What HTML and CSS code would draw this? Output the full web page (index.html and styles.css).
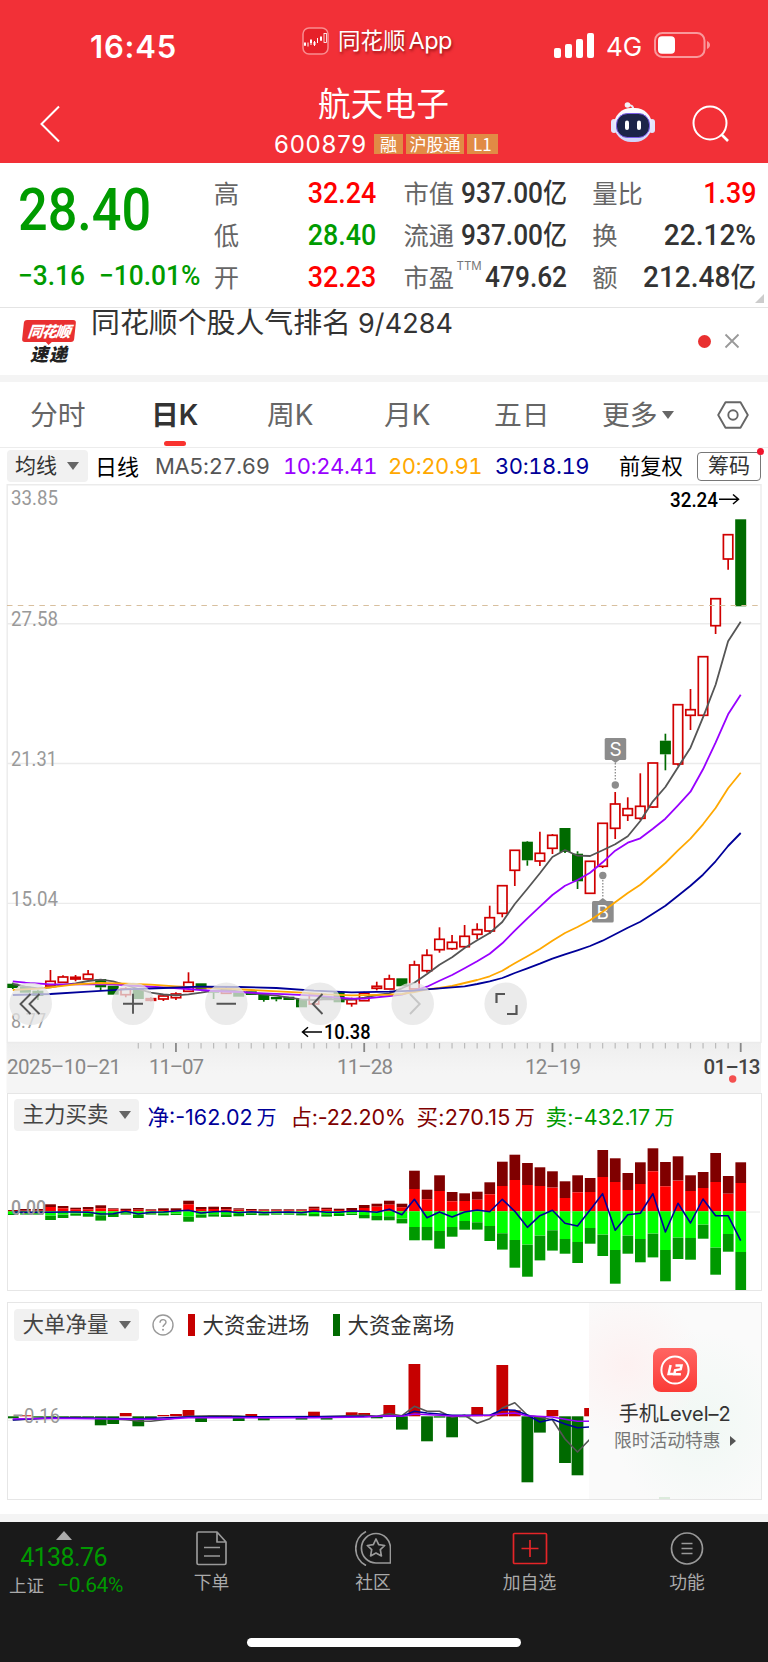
FILE: index.html
```html
<!DOCTYPE html>
<html lang="zh-CN">
<head>
<meta charset="utf-8">
<title>航天电子 600879</title>
<link rel="stylesheet" href="styles.css">
</head>
<body>
<header class="top">
  <div class="status">
    <span class="clock">16:45</span>
    <span class="app">
      <svg class="app-icon" viewBox="0 0 27 28"><rect x="1" y="1" width="25" height="26" rx="6" fill="#e62129" stroke="#f98d90" stroke-width="1.5"/><g stroke="#fff" stroke-width="1" fill="none"><path d="M3 15v4M6 15.500v4M9 12v6M12.500 14v5M15.500 11v5M19 9v5M23 6v10"/></g><g fill="#fff"><rect x="2" y="16" width="2" height="2.500"/><rect x="8" y="13" width="2" height="3"/><rect x="11.500" y="15" width="2" height="3"/><rect x="18" y="10" width="2" height="3.500"/></g><rect x="22" y="6.500" width="2.400" height="9" fill="#e62129" stroke="#fff" stroke-width=".8"/></svg>
      <span class="app-name">同花顺<i>App</i></span>
    </span>
    <span class="signal"><i></i><i></i><i></i><i></i></span>
    <span class="net">4G</span>
    <svg class="battery" viewBox="0 0 58 26"><rect x="1" y="1" width="49.500" height="24" rx="7.500" fill="none" stroke="#f9989b" stroke-width="2"/><rect x="4" y="4.300" width="17" height="17.400" rx="4" fill="#fff"/><path d="M53 9c4 1.500 4 6.500 0 8z" fill="#f9989b"/></svg>
  </div>
  <div class="nav">
    <svg class="back" viewBox="0 0 22 38"><path d="M20 1.500 2.500 19 20 36.500" fill="none" stroke="#fff" stroke-width="2"/></svg>
    <div class="stock">
      <div class="name">航天电子</div>
      <div class="code"><span class="num">600879</span><b>融</b><b>沪股通</b><b>L1</b></div>
    </div>
    <svg class="robot" viewBox="0 0 44 42">
      <defs><linearGradient id="shell" x1="0" y1="0" x2="0" y2="1"><stop offset="0" stop-color="#fff"/><stop offset="1" stop-color="#cfd3fb"/></linearGradient></defs>
      <path d="M22 9Q23 4 17 4" fill="none" stroke="#e8e8f4" stroke-width="2"/><circle cx="16.500" cy="4" r="2.800" fill="#f3f3fa"/>
      <rect x="0" y="18" width="6" height="14" rx="3" fill="#e3e5fb"/><rect x="38" y="18" width="6" height="14" rx="3" fill="#e3e5fb"/>
      <rect x="3" y="7" width="38" height="34" rx="17" fill="url(#shell)"/>
      <rect x="5.500" y="12.500" width="33" height="24" rx="11" fill="#1c2448" stroke="#7a5be8" stroke-width="1"/>
      <rect x="14" y="19.500" width="4" height="9.500" rx="2" fill="#fff"/><rect x="26" y="19.500" width="4" height="9.500" rx="2" fill="#fff"/>
    </svg>
    <svg class="search" viewBox="0 0 38 38"><circle cx="18" cy="18" r="16.500" fill="none" stroke="#fff" stroke-width="2"/><path d="M29.500 29.500 36 36" stroke="#fff" stroke-width="2.600"/></svg>
  </div>
</header>

<section class="quote">
  <div class="last">
    <div class="price">28.40</div>
    <div class="change"><span>−3.16</span><span>−10.01%</span></div>
  </div>
  <dl class="col c1">
    <div><dt>高</dt><dd class="up">32.24</dd></div>
    <div><dt>低</dt><dd class="down">28.40</dd></div>
    <div><dt>开</dt><dd class="up">32.23</dd></div>
  </dl>
  <dl class="col c2">
    <div><dt>市值</dt><dd>937.00<em>亿</em></dd></div>
    <div><dt>流通</dt><dd>937.00<em>亿</em></dd></div>
    <div><dt>市盈<sup>TTM</sup></dt><dd>479.62</dd></div>
  </dl>
  <dl class="col c3">
    <div><dt>量比</dt><dd class="up">1.39</dd></div>
    <div><dt>换</dt><dd class="wide-n">22.12%</dd></div>
    <div><dt>额</dt><dd class="wide-n">212.48<em>亿</em></dd></div>
  </dl>
  <span class="corner"></span>
</section>

<section class="news">
  <div class="badge"><span class="b1">同花顺</span><span class="b2">速递</span></div>
  <p>同花顺个股人气排名<span>9/4284</span></p>
  <i class="dot"></i>
  <svg class="close" viewBox="0 0 16 16"><path d="M1.500 1.500l13 13M14.500 1.500l-13 13" stroke="#999" stroke-width="1.800"/></svg>
</section>

<nav class="tabs">
  <span>分时</span><span class="on">日<i>K</i></span><span>周<i>K</i></span><span>月<i>K</i></span><span>五日</span><span class="more">更多<i class="tri"></i></span>
  <svg class="hex" viewBox="0 0 32 28"><path d="M8.500 1.200h15L30.800 14l-7.300 12.800h-15L1.200 14z" fill="none" stroke="#666" stroke-width="1.900" stroke-linejoin="round"/><circle cx="16" cy="14" r="4.700" fill="none" stroke="#666" stroke-width="1.900"/></svg>
</nav>

<section class="ma">
  <span class="pick">均线<i class="tri"></i></span>
  <span class="kind">日线</span>
  <span class="v m5">MA5:27.69</span><span class="v m10">10:24.41</span><span class="v m20">20:20.91</span><span class="v m30">30:18.19</span>
  <span class="adj">前复权</span>
  <span class="chips">筹码</span>
</section>

<svg class="kline" id="kline" viewBox="0 484 768 609"></svg>

<section class="panel flow">
  <div class="head"><span class="pick wide">主力买卖<i class="tri"></i></span>
    <span class="f f1">净:-162.02<em>万</em></span><span class="f f2">占:-22.20%</span><span class="f f3">买:270.15<em>万</em></span><span class="f f4">卖:-432.17<em>万</em></span></div>
  <svg id="flow" viewBox="8 1134 752 156"></svg>
</section>

<section class="panel big">
  <div class="main">
    <div class="head"><span class="pick wide">大单净量<i class="tri"></i></span>
      <svg class="help" viewBox="0 0 22 22"><circle cx="11" cy="11" r="10" fill="none" stroke="#999" stroke-width="1.400"/><path d="M8 8.700c0-4 6-4 6-.4 0 2.300-3 2.400-3 4.700" fill="none" stroke="#999" stroke-width="1.400"/><circle cx="11" cy="15.800" r="1" fill="#999"/></svg>
      <span class="leg in"><span>大资金进场</span></span><span class="leg out"><span>大资金离场</span></span></div>
    <svg id="big" viewBox="8 1343 581 156"></svg>
  </div>
  <aside class="promo">
    <svg class="l2" viewBox="0 0 44 44"><defs><linearGradient id="l2bg" x1="0" y1="0" x2="0" y2="1"><stop offset="0" stop-color="#ff6562"/><stop offset="1" stop-color="#fb3b36"/></linearGradient></defs><rect width="44" height="44" rx="8" fill="url(#l2bg)"/><circle cx="22" cy="22" r="13.600" fill="none" stroke="#fff" stroke-width="2"/><path d="M17.600 17 15.600 26h4.600M22.500 17.600h6l-.8 3.600-5.600 1.100-.8 4h6.600" fill="none" stroke="#fff" stroke-width="2.500"/></svg>
    <strong>手机<i>Level–2</i></strong>
    <small>限时活动特惠<i></i></small>
    <i class="peek"></i>
  </aside>
</section>

<footer class="bar">
  <div class="index"><i class="uptri"></i><span class="iv">4138.76</span><span class="ir">上证<b>−0.64%</b></span></div>
  <div class="items">
    <a class="i1"><svg viewBox="0 0 36 36"><path d="M4 3.500a1.500 1.500 0 0 1 1.500-1.500H24l9 10v21a1.500 1.500 0 0 1-1.500 1.500h-26A1.500 1.500 0 0 1 4 33zM24 2v10h9M11 17.500h16M11 26h16" transform="translate(-1 0)"/></svg>下单</a>
    <a class="i2"><svg viewBox="0 0 36 36"><path d="M21 3.500a14.500 15 0 0 1 14.500 15V33H21A14.500 14.700 0 0 1 21 3.500zM11 1.500a18.500 19 0 0 0 0 34M21 9l2.700 5.700 6 .8-4.400 4.200 1.100 6.200L21 23l-5.400 2.900 1.100-6.200-4.400-4.200 6-.8z"/></svg>社区</a>
    <a class="i3"><svg class="red" viewBox="0 0 36 36"><path d="M1.500 4.500a1 1 0 0 1 1-1h31a1 1 0 0 1 1 1v28a1 1 0 0 1-1 1h-31a1 1 0 0 1-1-1zM18 10v17M9.500 18.500h17"/></svg>加自选</a>
    <a class="i4"><svg viewBox="0 0 36 36"><circle cx="18" cy="18.500" r="15.500"/><path d="M12.500 13.500h11M12.500 18.500h11M12.500 23.500h11"/></svg>功能</a>
  </div>
  <div class="home"></div>
</footer>
<script src="charts.js"></script>
</body>
</html>
```
FILE: styles.css
```css
* { box-sizing: border-box; }
body { margin: 0; width: 768px; height: 1662px; overflow: hidden; background: #fff; color: #333; font-family: Inter, "Noto Sans CJK SC", sans-serif; }
i, em { font-style: normal; }
svg { display: block; flex: none; }
p, dl, dd { margin: 0; }

.top { height: 163px; background: #f23037; color: #fff; }
.status { height: 75px; display: flex; position: relative; }
.clock { margin: 28px 0 0 90px; width: 212px; font-size: 31px; line-height: 38px; font-weight: 600; letter-spacing: .8px; }
.app { display: flex; margin-top: 27px; width: 252px; }
.app-icon { width: 27px; height: 28px; }
.app-name { margin-left: 9px; font-size: 22.500px; line-height: 28px; text-shadow: 1px 2px 3px rgba(90,0,0,.6); white-space: nowrap; }
.app-name i { margin-left: 3px; font-size: 23.500px; letter-spacing: -.6px; }
.signal { display: flex; gap: 4px; align-items: flex-end; height: 25px; margin-top: 33px; width: 52px; }
.signal i { width: 7px; background: #fff; border-radius: 2px; height: 10px; }
.signal i:nth-child(2) { height: 14px; }
.signal i:nth-child(3) { height: 19px; }
.signal i:nth-child(4) { height: 25px; }
.net { width: 48px; margin-top: 32px; font-size: 26px; line-height: 30px; }
.battery { width: 58px; height: 26px; margin-top: 32px; }
.nav { display: flex; height: 88px; }
.back { width: 22px; height: 38px; margin: 30px 0 0 39px; }
.stock { width: 549px; height: 88px; padding-left: 213px; }
.name { margin-top: 8px; height: 44px; line-height: 44px; font-size: 32.500px; letter-spacing: .3px; padding-left: 44px; }
.code { display: flex; align-items: center; gap: 3px; height: 32px; margin-top: 1px; }
.num { font-size: 24px; width: 97px; letter-spacing: .8px; }
.code b { background: #e18b45; font-weight: 400; font-size: 17px; line-height: 20px; height: 20px; padding: 0 6px; font-family: "Noto Sans CJK SC"; }
.code b:nth-child(3) { padding: 0 3.500px; }
.robot { width: 44px; height: 42px; margin: 26px 0 0 1px; }
.search { width: 38px; height: 38px; margin: 30px 0 0 37px; }

.quote { position: relative; height: 145px; display: flex; border-bottom: 1px solid #e4e4e4; padding: 9px 12px 0 18px; font-family: Roboto, "Noto Sans CJK SC", sans-serif; }
.last { width: 196px; color: #009b00; }
.price { font-size: 60px; line-height: 74px; font-weight: 500; transform: scaleX(.87); transform-origin: left; padding-top: 1px; }
.change { display: flex; justify-content: space-between; width: 194px; margin-top: 12px; font-size: 28px; line-height: 34px; white-space: nowrap; font-weight: 500; transform: scaleX(.94); transform-origin: left; }
.col > div { display: flex; justify-content: space-between; height: 42px; line-height: 42px; white-space: nowrap; }
.c1 { width: 163px; }
.c2 { width: 164px; margin-left: 27px; }
.c3 { width: 164px; margin-left: 25px; }
dt { color: #666; font-size: 25.300px; font-family: "Noto Sans CJK SC"; position: relative; top: -1px; }
dt sup { position: absolute; left: 53px; top: -10px; font: 11.500px Inter; line-height: 42px; color: #777; }
dd { margin-left: -30px; font-size: 29.500px; font-weight: 500; transform: scaleX(.91); transform-origin: right; }
.c2 dd { transform: scaleX(.89); }
dd.wide-n { transform: scaleX(.95); }
dd em { font-size: 27px; font-weight: 500; }
.up { color: #f00; }
.down { color: #009b00; }
.corner { position: absolute; right: 4px; bottom: 4px; border-left: 9px solid transparent; border-bottom: 9px solid #ccc; }

.news { display: flex; height: 74px; border-bottom: 7px solid #f4f4f4; }
.badge { width: 52px; margin: 12px 0 0 23px; text-align: center; font-family: "Noto Sans CJK SC"; font-weight: 900; font-style: italic; }
.badge span { display: block; }
.b1 { position: relative; background: #e93030; color: #fff; font-size: 15px; line-height: 21px; height: 22px; border-radius: 3px; transform: skewX(-6deg); letter-spacing: -1px; }
.b1::after { content: ""; position: absolute; left: 23px; top: 21px; border: 4px solid transparent; border-top-color: #e93030; border-bottom: 0; }
.b2 { color: #222; font-size: 18px; line-height: 22px; letter-spacing: 1px; }
.news p { margin: -6px 0 0 16px; width: 607px; font-size: 28.900px; line-height: 42px; color: #333; white-space: nowrap; }
.news p span { margin-left: 7px; font-size: 27px; letter-spacing: .1px; }
.dot { width: 13px; height: 13px; border-radius: 50%; background: #e93030; margin-top: 27px; }
.close { width: 16px; height: 16px; margin: 25px 0 0 13px; }

.tabs { display: flex; align-items: center; height: 66px; border-bottom: 1px solid #ececec; font-size: 27.800px; color: #666; padding-left: 30px; font-family: "Noto Sans CJK SC"; white-space: nowrap; }
.tabs i { font-family: Inter; }
.tabs span { height: 65px; line-height: 62px; width: 116px; }
.tabs span:nth-child(1) { width: 121px; }
.tabs span:nth-child(3) { width: 117px; }
.tabs span:nth-child(4) { width: 110px; }
.tabs span:nth-child(5) { width: 108px; }
.tabs span:nth-child(6) { width: 115px; }
.tabs .on { font-weight: 600; color: #333; position: relative; }
.tabs .on::after { content: ""; position: absolute; left: 13px; bottom: 1px; width: 22px; height: 5px; border-radius: 3px; background: #f9332f; }
.tri { display: inline-block; border: 6px solid transparent; border-top: 8px solid #666; border-bottom: 0; vertical-align: middle; }
.more .tri { margin-left: 4px; margin-top: -4px; }
.hex { width: 32px; height: 28px; }

.ma { display: flex; align-items: center; height: 36px; padding-left: 7px; font-size: 22px; white-space: nowrap; }
.pick { width: 81px; height: 32px; background: #f1f1f1; border-radius: 4px; line-height: 31px; padding-left: 8px; font-size: 21px; color: #333; }
.pick .tri { margin-left: 10px; margin-top: -2px; }
.kind { width: 67px; padding: 0 0 3px 7px; color: #000; }
.v { font-feature-settings: "tnum"; letter-spacing: -.4px; }
.m5 { width: 128px; color: #555; }
.m10 { width: 105px; color: #90f; }
.m20 { width: 107px; color: #ffa800; }
.m30 { width: 124px; color: #009; }
.adj { width: 78px; padding-bottom: 3px; font-size: 21.300px; color: #000; }
.chips { position: relative; width: 64px; height: 29px; border: 1.500px solid #777; border-radius: 4px; text-align: center; line-height: 26px; font-size: 21px; }
.chips::after { content: ""; position: absolute; right: -4px; top: -5px; width: 7px; height: 7px; border-radius: 50%; background: #f0142d; }

.kline { width: 768px; height: 609px; }
.panel { width: 755px; height: 198px; margin-left: 6.500px; border: 1px solid #e6e6e6; }
.flow > svg { width: 752px; height: 156px; margin-left: .5px; }
.head { height: 40px; display: flex; align-items: center; padding: 2px 0 0 6px; font-size: 22px; white-space: nowrap; }
.wide { width: 125px; padding-left: 9px; font-size: 21.500px; color: #444; }
.head em { margin-left: 4px; font-size: 20px; }
.f { font-size: 21.500px; letter-spacing: 0; }
.f1 { margin-left: 9px; width: 143px; color: #009; }
.f2 { width: 126px; color: #800000; letter-spacing: -.2px; }
.f3 { width: 129px; color: #800000; letter-spacing: .3px; }
.f4 { color: #090; letter-spacing: .2px; }
.big { margin-top: 11px; display: flex; }
.main { width: 581.500px; }
.big .head { height: 41px; padding-top: 3px; }
.main > svg { width: 581px; height: 156px; margin-left: .5px; margin-top: -1px; }
.help { width: 22px; height: 22px; margin: 0 14px 0 13px; }
.leg { font-size: 21.400px; width: 145px; display: flex; align-items: center; }
.leg span { padding-bottom: 3px; }
.leg::before { content: ""; width: 7px; height: 22px; margin-right: 8px; background: #c60000; }
.out::before { background: #006a00; }
.promo { flex: 1; display: flex; flex-direction: column; align-items: center; background: radial-gradient(ellipse at 22% 32%, #fdf1f1 0, rgba(253,241,241,0) 40%), radial-gradient(ellipse at 65% 62%, #f0f8f4 0, rgba(240,248,244,0) 55%), #fafafa; }
.l2 { width: 44px; height: 44px; margin-top: 45px; }
.promo strong { margin-top: 8px; font-weight: 400; font-size: 20px; line-height: 28px; color: #333; }
.promo small { font-size: 17.800px; line-height: 25px; color: #777; display: flex; align-items: center; }
.promo small i { margin-left: 9px; border: 5px solid transparent; border-left: 6px solid #555; border-right: 0; }
.peek { width: 11px; height: 2px; margin: auto 20px 0 0; background: #dcebdc; }

.bar { margin-top: 14px; height: 149px; border-top: 8px solid #f4f4f4; background: #1a1a1a; display: grid; grid-template: 108px 1fr / 130px 1fr; color: #aaa; }
.index { display: flex; flex-direction: column; align-items: center; padding-top: 9px; font-family: Roboto, "Noto Sans CJK SC"; }
.uptri { border: 8px solid transparent; border-bottom: 9px solid #aaa; border-top: 0; margin-right: 3px; }
.iv { font-size: 25px; line-height: 29px; margin-top: 3px; margin-right: 3px; color: #090; letter-spacing: -.6px; }
.ir { font-size: 17.500px; line-height: 27px; margin-left: 2px; }
.ir b { margin-left: 13px; font-size: 21px; font-weight: 400; color: #090; letter-spacing: -.4px; }
.items { display: flex; font-size: 17.800px; }
.items a { display: flex; flex-direction: column; align-items: center; padding-top: 8px; width: 160px; line-height: 26px; gap: 4px; }
.items .i1 { width: 163px; }
.items svg { width: 36px; height: 36px; fill: none; stroke: #999; stroke-width: 1.700; stroke-linejoin: round; }
.items .red { stroke: #e52528; }
.items .i3 { width: 153px; }
.items .i4 { width: 162px; }
.home { grid-column: 1 / 3; justify-self: center; width: 274px; height: 9px; margin-top: 8px; border-radius: 5px; background: #fff; }
```
FILE: charts.js
```js
const STEP = 12.55, X0 = 12.8;
const xAt = i => X0 + STEP * i;
const rect = (x, y, w, h, c, extra = '') => `<rect x="${x.toFixed(1)}" y="${y.toFixed(1)}" width="${w}" height="${Math.max(h, 1).toFixed(1)}" fill="${c}" ${extra}/>`;
const label = (x, y, w, s, size, c, weight = 400) => `<text x="${x}" y="${y}" textLength="${w}" lengthAdjust="spacingAndGlyphs" font-family="Roboto" font-size="${size}" font-weight="${weight}" fill="${c}">${s}</text>`;
const poly = (pts, c, w = 1.8) => `<polyline points="${pts.map(p => xAt(p[0]).toFixed(1) + ',' + p[1].toFixed(1)).join(' ')}" fill="none" stroke="${c}" stroke-width="${w}" stroke-linejoin="round"/>`;

// colour, body top, body bottom, high, low
const candles = [
  ['g',983.7,988,982.7,989],['g',986.7,992.7],['g',990.7,996,990,1000],['r',981.3,986,970],['r',977,982.3,975.3],['r',977.3,979,975,981.3],['r',974.3,979,970],
  ['g',979,987.3,979,990],['g',985.7,994.7],['r',989,994.7,987.3,997.3],['g',988.3,999],['r',998.7,1000.3,997.3,1001.3],['r',996,999,995,1001],['r',994,997.7,992.3,1000],
  ['r',982.3,991.3,972.3],['g',983.3,989.3],['g',990,992.7,990,999],['r',989,993.3,986],['g',991.3,996.7],['g',991.3,995],['g',994.7,1000,994.7,1001.7],['g',997,999.3,997,1001.3],
  ['g',996.7,1000],['g',999,1007.3],['r',995.3,1004,995.3,1005],['g',996.7,998.7],['g',991.7,1002.3],['r',999.7,1003.7,997.7,1006.7],['r',993.3,1000.7,991.7],['r',986.3,988.3,981.7,990.3],
  ['r',979,989,974.7],['g',978.3,986.3],['r',965,989,960.7],['r',955.3,970.7,949.3,972.7],['r',939.3,949.7,927.3,952.7],['r',942.3,948.7,935,950],['r',936.3,946.7,925,948],
  ['r',929.7,934.3,923.3,939.3],['r',917.7,931,905.7,934],['r',885.7,913.3,885.7,917.3],['r',850.3,870.3,850.3,886],['g',841.7,860.3,841,865.7],['r',853.3,861,831.7,866],
  ['r',835.3,848.3,834,854],['g',828,852,828,853],['g',853.7,881.3,851.3,889],['r',861.3,893.3],['r',823.3,866.3,823.3,868],['r',804,828.3,792,839],['r',808.7,815.3,797.3,821],
  ['r',806.3,818.3,773.3,820],['r',763,807,763,808],['g',740.7,754.3,733.7,770.3],['r',704.7,764,704.7,765.7],['r',709.7,715.3,689,730],['r',656.7,715.3],['r',598.7,625.7,598.7,634],
  ['r',534.7,559,534.7,569.7],['g',519.3,606.3]
];
const ma5 = [984,986.7,988.3,987.3,985,983.3,981,979.7,981.3,985,989,992.7,994.5,995.3,994.3,992.7,990.7,990,991.3,993.3,994.7,995.7,997.7,999.3,1000,999,999.3,999.3,997.7,995,993.3,988.3,982.7,974,964.7,957.3,948,940.3,933,922,904,888.7,873.3,857,850,855.7,856,850.3,844.3,836.3,821,801.3,787,767.3,747.7,717.3,684.7,641.3,621.7].map((y, i) => [i, y]);
const ma10 = [[0,981.3],[1,982.7],[3,984.3],[8,984.3],[10,986],[12,987.3],[14,989],[16,991],[18,992],[20,993.3],[22,994.3],[24,995.7],[26,997.7],[27,998.7],[28,998.7],[29,997.3],[30,996],[31,994.7],[32,990.7],[33,986.7],[34,980.7],[35,975],[36,968.3],[37,961.3],[38,953.7],[39,943.3],[40,930.7],[41,918.3],[42,906.7],[43,895],[44,885.7],[45,880],[46,872.7],[47,862.3],[48,850.7],[49,842.7],[50,838.3],[51,828.7],[52,818.7],[53,805.3],[54,791.7],[55,769.3],[56,742.7],[57,714.3],[58,694.7]];
const ma20 = [[0,990],[2,988.7],[3,987.3],[5,984.3],[7,983],[9,983.7],[11,984.7],[13,986.3],[17,988.7],[19,990],[23,992.7],[25,994.3],[27,995.3],[30,994.7],[31,994],[32,992],[33,989.3],[34,988],[35,986],[36,983],[37,980],[38,976.3],[39,970.7],[40,963.3],[41,956.3],[42,949],[43,940.7],[44,933],[45,927],[46,920.3],[47,911.7],[48,902.3],[49,893],[50,884.7],[51,874],[52,863],[53,850.3],[54,838.7],[55,824.3],[56,808],[57,788.3],[58,772.7]];
const ma30 = [[0,995],[3,994],[6,991.7],[9,989.3],[12,988],[15,986.7],[18,987],[21,988],[24,990.7],[27,992.3],[30,991.7],[32,990.7],[33,989.3],[34,988.3],[36,986.3],[37,984],[38,981.3],[39,978],[40,973],[41,968.3],[42,963.7],[43,958.7],[44,954.3],[45,950.3],[46,946],[47,940.7],[48,934.3],[49,927.7],[50,921.7],[51,913.7],[52,905.7],[53,895.7],[54,885.7],[55,874.7],[56,861.3],[57,846],[58,833]];

function drawKline() {
  let s = '<defs><linearGradient id="fade" x1="0" y1="0" x2="0" y2="1"><stop offset="0" stop-color="#eee"/><stop offset=".6" stop-color="#f5f5f5"/></linearGradient></defs>';
  s += rect(6.5, 1043, 754.5, 50, 'url(#fade)');
  for (const y of [484.7, 623.7, 763.5, 903.4, 1042.5]) s += `<path d="M7 ${y}H761" stroke="#ebebeb" stroke-width="1.4"/>`;
  s += '<path d="M7.2 484V1043M761 484V1043" stroke="#ebebeb" stroke-width="1.4"/>';
  s += label(11, 505, 47, '33.85', 21, '#999') + label(11, 626, 47, '27.58', 21, '#999') + label(11, 766, 46, '21.31', 21, '#999') + label(11, 906, 47, '15.04', 21, '#999') + label(11, 1028, 35, '8.77', 21, '#999');
  candles.forEach(([k, t, b, h = t, l = b], i) => {
    const x = xAt(i), c = k === 'r' ? '#d00000' : '#006a00';
    if (h < t) s += `<path d="M${x} ${h}V${t}" stroke="${c}" stroke-width="1.7"/>`;
    if (l > b) s += `<path d="M${x} ${b}V${l}" stroke="${c}" stroke-width="1.7"/>`;
    s += k === 'r' ? rect(x - 4.7, t, 9.4, b - t, '#fff', 'stroke="#d00000" stroke-width="1.7"') : rect(x - 5.5, t, 11, b - t, c);
  });
  s += '<path d="M7 605.5H761" stroke="#d8bf9e" stroke-width="1" stroke-dasharray="5.500 5.300"/>';
  s += '<g fill="#8c8c8c"><rect x="604.700" y="738" width="21.500" height="22" rx="1.500"/><path d="M611.500 760h8l-4 3z"/><circle cx="615.300" cy="785" r="3.700"/><rect x="592" y="901" width="21.700" height="21.500" rx="1.500"/><path d="M598.800 901h8l-4-3z"/><circle cx="602.800" cy="875.500" r="3.700"/></g>';
  s += '<path d="M615.300 763V781M602.800 880V898" stroke="#8c8c8c" stroke-width="1.300" stroke-dasharray="1.500 1.500"/>';
  s += '<g font-family="Inter" font-size="19" fill="#fff" text-anchor="middle"><text x="615.500" y="756">S</text><text x="602.800" y="919">B</text></g>';
  s += poly(ma5, '#555') + poly(ma10, '#9900ff') + poly(ma20, '#ffa800') + poly(ma30, '#000099');
  s += label(670, 506.5, 48, '32.24', 21, '#000', 500) + '<path d="M719 499.300H738.500M733 494.500L738.500 499.300L733 504" fill="none" stroke="#000" stroke-width="1.500"/>';
  s += label(324, 1039, 46.5, '10.38', 21, '#000', 500) + '<path d="M322 1032H302.500M308 1027.300L302.500 1032L308 1036.700" fill="none" stroke="#000" stroke-width="1.500"/>';
  for (const x of [30.7, 133, 226.3, 320, 412.7, 505.7]) s += `<circle cx="${x}" cy="1003.7" r="21.3" fill="#e4e4e4" fill-opacity=".75"/>`;
  s += '<g fill="none" stroke="#555" stroke-width="1.900"><path d="M30.500 994L20.500 1004L30.500 1014M39.500 994L29.500 1004L39.500 1014M123 1003.700H143M133 993.700V1013.700M216.500 1003.700H236M322.500 994L312.800 1004L322.500 1014"/><path d="M410 994L419.700 1004L410 1014" stroke="#c6c6c6"/><path d="M496.500 1003V994H505M516.500 1005V1014H507" stroke-width="2.200"/></g>';
  for (let i = 10; i <= 58; i++) {
    const major = i % 15 === 13;
    s += `<path d="M${xAt(i)} 1043V${major ? 1052 : 1048.5}" stroke="${major ? '#888' : '#bbb'}" stroke-width="${major ? 1.8 : 1.2}"/>`;
  }
  const date = (x, w, t, c = '#888', wt = 400) => `<text x="${x}" y="1074" textLength="${w}" font-family="Roboto" font-size="20.500" font-weight="${wt}" fill="${c}">${t}</text>`;
  s += date(7, 114, '2025–10–21') + date(149, 55, '11–07') + date(337, 56, '11–28') + date(525, 56, '12–19') + date(703.5, 57, '01–13', '#444', 500);
  s += '<circle cx="732.700" cy="1079" r="3.700" fill="#f4504f"/>';
  document.getElementById('kline').innerHTML = s;
}

// dark red top, red top, green bottom, dark green bottom; thirds of a pixel from 1090
const flows = [
  [360,362,372,374],[357,362,370,374],[357,362,370,374],[343,351,377,390],[348,355,374,384],[353,358,371,377],[351,358,372,380],[346,355,376,392],[355,358,372,381],[356,360,370,374],
  [354,359,374,384],[358,361,370,374],[355,360,371,376],[355,360,371,375],[332,343,380,395],[351,357,374,383],[350,357,373,380],[351,358,373,381],[355,359,372,379],[357,361,370,375],
  [358,361,371,376],[358,361,371,374],[358,361,371,374],[358,361,371,376],[350,356,372,379],[353,358,373,380],[356,360,372,378],[354,360,371,375],[345,354,375,385],[341,350,378,391],
  [332,344,379,391],[341,352,386,400],[242,297,411,451],[299,328,411,451],[256,303,423,476],[306,334,411,440],[310,333,393,419],[305,329,397,419],[277,313,408,453],[215,288,430,479],
  [194,270,450,533],[219,285,464,560],[232,288,437,511],[244,293,421,482],[274,324,447,491],[256,307,456,519],[264,306,414,461],[180,261,434,498],[205,276,480,581],[249,300,437,491],
  [217,282,447,517],[175,244,431,502],[216,289,480,574],[199,272,443,507],[256,303,444,509],[246,294,404,446],[189,276,473,554],[258,311,432,485],[217,279,486,600]
];
const net = [366,367,367,367,366,366,367,372,371,364,372,367,366,363,361,369,365,364,368,365,368,367,366,368,363,367,367,363,364,367,358,374,328,383,366,381,366,360,365,328,364,412,377,361,400,408,360,311,421,374,370,311,426,340,399,327,377,377,452];

function drawFlow() {
  const y = v => 1090 + v / 3;
  let s = '<path d="M8 1212H761" stroke="#e6e6e6"/>';
  flows.forEach(([a, b, c, d], i) => {
    const x = xAt(i) - 5.3;
    s += rect(x, y(a), 10.7, (b - a) / 3, '#800000') + rect(x, y(b), 10.7, (364 - b) / 3, '#ff0000')
      + rect(x, y(364), 10.7, (c - 364) / 3, '#00ff00') + rect(x, y(c), 10.7, (d - c) / 3, '#009900');
  });
  s += poly(net.map((v, i) => [i, y(v)]), '#000099', 1.6);
  s += label(11, 1215, 35, '0.00', 20.5, '#999', 500);
  document.getElementById('flow').innerHTML = s;
}

// value ends, thirds of a pixel from 1295; above 364 is inflow
const orders = [370,361,368,368,368,368,368,391,387,354,394,370,360,357,345,381,361,361,378,357,376,368,368,374,350,374,368,352,354,370,330,404,207,439,368,427,366,336,361,210,346,562,413,345,504,541,339];
function drawBig() {
  const y = v => 1295 + v / 3;
  let s = '<path d="M8 1420.500H589" stroke="#eee"/>';
  orders.forEach((v, i) => {
    const x = xAt(i) - 5.9;
    s += v < 364 ? rect(x, y(v), 11.8, (364 - v) / 3, '#c60000') : rect(x, y(364), 11.8, (v - 364) / 3, '#006a00');
  });
  const line = (a, c) => poly(a.map(p => [p[0], y(p[1])]), c, 1.6);
  s += line([[0,374],[5,367],[9,374],[10,378],[11,379],[12,374],[14,364],[16,362],[18,363],[20,368],[24,366],[28,361],[29,364],[30,356],[31,362],[32,334],[33,349],[34,349],[35,367],[36,361],[37,385],[38,371],[39,339],[40,323],[41,361],[42,367],[43,374],[44,432],[45,471],[46,432]], '#555');
  s += line([[0,375],[3,368],[10,371],[14,366],[31,364],[32,349],[33,354],[34,357],[35,361],[38,361],[39,344],[40,346],[41,360],[42,381],[43,373],[44,387],[45,398],[46,396]], '#000099');
  s += line([[0,372],[3,370],[10,373],[12,373],[14,368],[24,368],[28,366],[30,362],[31,364],[32,357],[34,361],[35,363],[38,361],[39,356],[40,354],[41,362],[43,366],[44,373],[45,379],[46,379]], '#9900ff');
  s += label(12, 1423, 48, '–0.16', 20.5, '#999');
  document.getElementById('big').innerHTML = s;
}
drawKline(); drawFlow(); drawBig();
```
